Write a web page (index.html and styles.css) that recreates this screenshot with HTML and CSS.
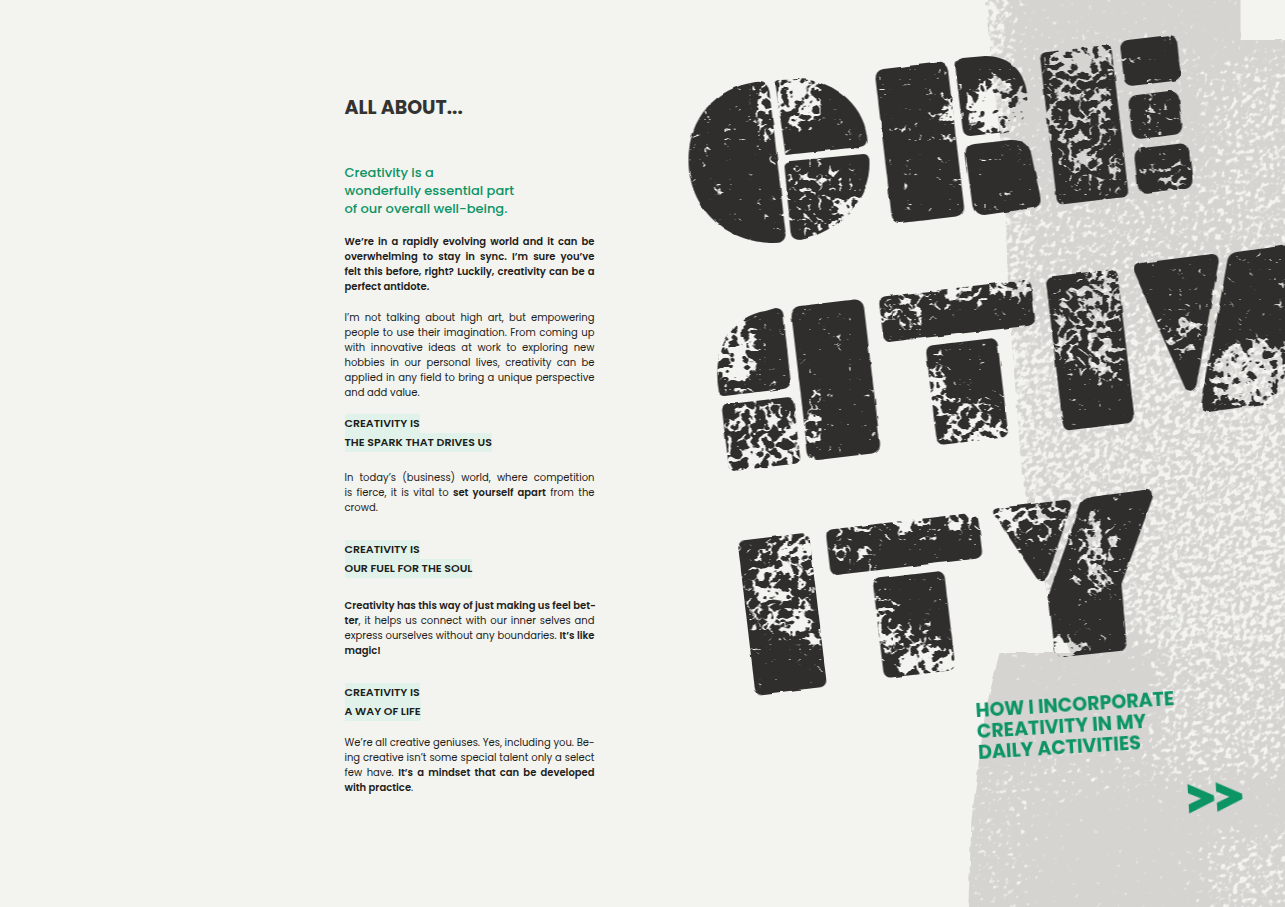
FILE: index.html
```html
<!DOCTYPE html>
<html lang="en">
<head>
<meta charset="utf-8">
<meta name="viewport" content="width=device-width, initial-scale=1">
<title>Creativity</title>
<link rel="stylesheet" href="styles.css">
</head>
<body>
<main class="spread">
  <article class="story">
    <h1 class="kicker">ALL ABOUT...</h1>
    <p class="lead">Creativity is a<br>wonderfully essential part<br>of our overall well-being.</p>
    <p class="copy strong">
      <span class="line">We’re in a rapidly evolving world and it can be</span>
      <span class="line">overwhelming to stay in sync. I’m sure you’ve</span>
      <span class="line">felt this before, right? Luckily, creativity can be a</span>
      <span class="line">perfect antidote.</span>
    </p>
    <p class="copy">
      <span class="line">I’m not talking about high art, but empowering</span>
      <span class="line">people to use their imagination. From coming up</span>
      <span class="line">with innovative ideas at work to exploring new</span>
      <span class="line">hobbies in our personal lives, creativity can be</span>
      <span class="line">applied in any field to bring a unique perspective</span>
      <span class="line">and add value.</span>
    </p>
    <h2 class="topic"><mark>CREATIVITY IS</mark><br><mark>THE SPARK THAT DRIVES US</mark></h2>
    <p class="copy">
      <span class="line">In today’s (business) world, where competition</span>
      <span class="line">is fierce, it is vital to <b>set yourself apart</b> from the</span>
      <span class="line">crowd.</span>
    </p>
    <h2 class="topic spaced airy"><mark>CREATIVITY IS</mark><br><mark>OUR FUEL FOR THE SOUL</mark></h2>
    <p class="copy">
      <span class="line"><b>Creativity has this way of just making us feel bet-</b></span>
      <span class="line"><b>ter</b>, it helps us connect with our inner selves and</span>
      <span class="line">express ourselves without any boundaries. <b>It’s like</b></span>
      <span class="line"><b>magic!</b></span>
    </p>
    <h2 class="topic spaced snug"><mark>CREATIVITY IS</mark><br><mark>A WAY OF LIFE</mark></h2>
    <p class="copy">
      <span class="line">We’re all creative geniuses. Yes, including you. Be-</span>
      <span class="line">ing creative isn’t some special talent only a select</span>
      <span class="line">few have. <b>It’s a mindset that can be developed</b></span>
      <span class="line"><b>with practice</b>.</span>
    </p>
  </article>

  <section class="poster">
    <svg class="art" viewBox="642.5 0 642.5 907" preserveAspectRatio="xMaxYMin slice" role="img" aria-label="Creativity">
      <defs>
        <filter id="flecks" filterUnits="userSpaceOnUse" x="640" y="0" width="660" height="907" color-interpolation-filters="sRGB">
          <feGaussianBlur in="SourceGraphic" stdDeviation="6" result="density"/>
          <feTurbulence type="fractalNoise" baseFrequency="0.09" numOctaves="2" seed="11"/>
          <feColorMatrix values="0 0 0 0 0  0 0 0 0 0  0 0 0 0 0  2 0 0 0 -0.5" result="patches"/>
          <feTurbulence type="turbulence" baseFrequency="0.1" numOctaves="2" seed="7"/>
          <feColorMatrix values="0 0 0 0 0  0 0 0 0 0  0 0 0 0 0  -1 0 0 0 1" result="veins"/>
          <feComposite in="veins" in2="patches" operator="arithmetic" k1="0" k2="0.75" k3="0.25" k4="0" result="mottle"/>
          <feComposite in="density" in2="mottle" operator="arithmetic" k1="0" k2="0.42" k3="1" k4="-0.99"/>
          <feComponentTransfer><feFuncA type="linear" slope="16"/></feComponentTransfer>
        </filter>
        <filter id="weave" filterUnits="userSpaceOnUse" x="500" y="-200" width="1260" height="1300" color-interpolation-filters="sRGB">
          <feGaussianBlur in="SourceGraphic" stdDeviation="16" result="density"/>
          <feTurbulence type="fractalNoise" baseFrequency="0.16 0.22" numOctaves="2" seed="21"/>
          <feColorMatrix values="0 0 0 0 0  0 0 0 0 0  0 0 0 0 0  1.6 0 0 0 -0.3" result="grain"/>
          <feComposite in="density" in2="grain" operator="arithmetic" k1="0" k2="0.62" k3="1" k4="-0.87"/>
          <feComponentTransfer><feFuncA type="linear" slope="4"/></feComponentTransfer>
        </filter>
        <filter id="rough" x="-5%" y="-5%" width="110%" height="110%" color-interpolation-filters="sRGB">
          <feTurbulence type="fractalNoise" baseFrequency="0.07" numOctaves="1" seed="3"/>
          <feDisplacementMap in="SourceGraphic" scale="3" xChannelSelector="R" yChannelSelector="G"/>
        </filter>
        <mask id="wash-wear" maskUnits="userSpaceOnUse" x="900" y="-20" width="420" height="960">
          <rect x="900" y="-20" width="420" height="960" fill="#fff"/>
          <g transform="rotate(-40 1130 450)">
            <g filter="url(#weave)">
              <g transform="rotate(40 1130 450)">
                <rect x="960" y="-60" width="50" height="250" opacity=".95"/>
                <rect x="990" y="190" width="310" height="160" opacity=".5"/>
                <rect x="980" y="340" width="320" height="300" opacity=".7"/>
                <rect x="980" y="160" width="46" height="480" opacity=".5"/>
                <rect x="1150" y="620" width="150" height="160" opacity=".62"/>
                <rect x="1200" y="60" width="100" height="130" opacity=".5"/>
                <rect x="1240" y="30" width="60" height="600" opacity=".2"/>
                <rect x="1030" y="20" width="170" height="170" opacity=".25"/>
                <rect x="970" y="760" width="60" height="150" opacity=".4"/>
                <rect x="1030" y="740" width="120" height="60" opacity=".3"/>
                <rect x="1200" y="830" width="100" height="90" opacity=".6"/>
              </g>
            </g>
          </g>
        </mask>
        <mask id="print-wear" maskUnits="userSpaceOnUse" x="640" y="0" width="660" height="907">
          <rect x="640" y="0" width="660" height="907" fill="#fff"/>
          <g filter="url(#flecks)" fill="#000">
            <rect x="640" y="0" width="660" height="907" opacity=".22"/>
            <ellipse cx="762" cy="110" rx="10" ry="40" opacity=".6"/>
            <ellipse cx="796" cy="102" rx="24" ry="26" opacity=".9"/>
            <ellipse cx="822" cy="200" rx="45" ry="36" opacity=".4"/>
            <ellipse cx="850" cy="215" rx="16" ry="22" opacity=".7"/>
            <ellipse cx="945" cy="118" rx="10" ry="18" opacity=".6"/>
            <ellipse cx="998" cy="108" rx="36" ry="28" opacity=".95"/>
            <ellipse cx="1082" cy="56" rx="38" ry="16" opacity="1"/>
            <ellipse cx="1078" cy="110" rx="34" ry="60" opacity=".55"/>
            <ellipse cx="1095" cy="172" rx="30" ry="24" opacity=".45"/>
            <ellipse cx="1150" cy="115" rx="20" ry="20" opacity=".4"/>
            <ellipse cx="1172" cy="178" rx="20" ry="18" opacity=".6"/>
            <ellipse cx="736" cy="350" rx="22" ry="40" opacity=".9"/>
            <ellipse cx="760" cy="440" rx="40" ry="40" opacity=".6"/>
            <ellipse cx="765" cy="460" rx="34" ry="14" opacity=".7"/>
            <ellipse cx="812" cy="425" rx="14" ry="32" opacity=".5"/>
            <ellipse cx="905" cy="310" rx="26" ry="26" opacity=".4"/>
            <ellipse cx="960" cy="292" rx="32" ry="10" opacity=".8"/>
            <ellipse cx="1015" cy="285" rx="20" ry="14" opacity=".9"/>
            <ellipse cx="934" cy="385" rx="10" ry="30" opacity=".8"/>
            <ellipse cx="965" cy="410" rx="34" ry="16" opacity=".5"/>
            <ellipse cx="980" cy="434" rx="34" ry="13" opacity="1"/>
            <ellipse cx="1105" cy="285" rx="20" ry="24" opacity=".7"/>
            <ellipse cx="1085" cy="325" rx="36" ry="48" opacity=".55"/>
            <ellipse cx="1110" cy="365" rx="20" ry="20" opacity=".6"/>
            <ellipse cx="1180" cy="330" rx="26" ry="18" opacity=".5"/>
            <ellipse cx="1252" cy="375" rx="42" ry="36" opacity=".95"/>
            <ellipse cx="795" cy="548" rx="20" ry="24" opacity=".7"/>
            <ellipse cx="778" cy="590" rx="36" ry="48" opacity=".55"/>
            <ellipse cx="804" cy="630" rx="20" ry="20" opacity=".6"/>
            <ellipse cx="853" cy="542" rx="26" ry="26" opacity=".4"/>
            <ellipse cx="908" cy="524" rx="32" ry="10" opacity=".8"/>
            <ellipse cx="964" cy="517" rx="20" ry="14" opacity=".9"/>
            <ellipse cx="881" cy="618" rx="10" ry="30" opacity=".8"/>
            <ellipse cx="912" cy="643" rx="34" ry="16" opacity=".5"/>
            <ellipse cx="928" cy="667" rx="34" ry="13" opacity="1"/>
            <ellipse cx="1010" cy="517" rx="20" ry="11" opacity=".9"/>
            <ellipse cx="1042" cy="520" rx="32" ry="22" opacity=".55"/>
            <ellipse cx="1096" cy="555" rx="22" ry="42" opacity=".65"/>
            <ellipse cx="1064" cy="648" rx="16" ry="13" opacity=".95"/>
          </g>
        </mask>
      </defs>

      <!-- brushed grey wash -->
      <g mask="url(#wash-wear)">
        <path class="wash" filter="url(#rough)" d="M982 -20H1240V40H1310V930H967L971 820L985 710L999 653H1070L1048 600L1022 480L1008 300L1004 180Z"/>
      </g>

      <!-- block-print lettering -->
      <g mask="url(#print-wear)">
        <g class="ink" filter="url(#rough)">
          <path d="M755 82Q767 80 769 92L785 232Q786 243 774 243C725 243 688 208 688 160C688 118 715 88 755 82Z"/>
          <path d="M775 84Q775 80 780 80L798 79C838 80 866 110 867 141Q867 146 860 147L785 155Z"/>
          <path d="M784 166Q784 162 790 161L863 154Q869 154 869 162C870 200 838 232 800 240Q791 240 790 232Z"/>
          <rect width="73" height="155" rx="9" transform="translate(874 70) rotate(-6.7)"/>
          <path d="M955 68Q954 60 962 58L985 56C1012 56 1026 75 1027 98C1027 118 1018 130 1005 132L970 136Q963 136 962 128Z"/>
          <path d="M965 154Q965 145 974 144L1010 140Q1027 139 1031 155L1040 198Q1041 206 1033 208L984 215Q974 215 972 206Z"/>
          <rect width="72" height="153" rx="6" transform="translate(1039 53) rotate(-6.7)"/>
          <rect width="57" height="46" rx="8" transform="translate(1119 41) rotate(-6.7)"/>
          <rect width="51" height="44" rx="9" transform="translate(1127 96) rotate(-6.7)"/>
          <rect width="55" height="46" rx="9" transform="translate(1133 149) rotate(-6.7)"/>

          <path d="M718 390C712 350 730 316 765 311L775 308Q782 308 783 315L790 380Q790 388 783 389L724 396Q718 396 718 390Z"/>
          <rect width="72" height="67" rx="6" transform="translate(721 405) rotate(-6.7)"/>
          <rect width="73" height="155" rx="9" transform="translate(790 307) rotate(-6.7)"/>
          <rect width="153" height="46" rx="7" transform="translate(878 297) rotate(-6.7)"/>
          <rect width="72" height="100" rx="7" transform="translate(925 346) rotate(-6.7)"/>
          <rect width="72" height="155" rx="7" transform="translate(1045 277) rotate(-6.7)"/>
          <path d="M1134 273Q1131 265 1140 263L1211 254Q1219 254 1218 263L1196 385Q1192 394 1185 389Z"/>
          <path d="M1227 260Q1229 253 1236 252L1310 242V320L1274 398Q1272 403 1264 404L1208 412Q1200 412 1201 403Z"/>

          <rect width="72" height="155" rx="7" transform="translate(737 541) rotate(-6.7)"/>
          <rect width="153" height="46" rx="7" transform="translate(825 530) rotate(-6.7)"/>
          <rect width="72" height="100" rx="7" transform="translate(872 579) rotate(-6.7)"/>
          <path d="M993 514Q991 509 998 508L1064 500Q1072 500 1070 508L1047 577Q1042 585 1036 578Z"/>
          <path d="M1080 504Q1082 499 1090 497L1144 490Q1154 489 1152 498L1121 584L1126 643Q1126 650 1119 651L1062 657Q1055 657 1054 649L1048 595Z"/>
        </g>
      </g>
    </svg>
    <div class="teaser">
      <h2 class="teaser-title">HOW I INCORPORATE<br>CREATIVITY IN MY<br>DAILY ACTIVITIES</h2>
      <a class="next" href="#next" aria-label="Next page">&gt;&gt;</a>
    </div>
  </section>
</main>
</body>
</html>
```
FILE: styles.css
```css
* {
  box-sizing: border-box;
}

body {
  margin: 0;
  background: #f3f3ef;
  color: #1d1d1b;
  font-family: Poppins, Inter, "Open Sans", sans-serif;
}

.spread {
  display: grid;
  grid-template-columns: 1fr 1fr;
  min-height: 100vh;
  overflow: hidden;
}

.story {
  justify-self: end;
  width: 250px;
  margin-right: 48px;
  padding: 96px 0 40px;
}

.kicker {
  margin: 0 0 44px;
  color: #333331;
  font-size: 19px;
  line-height: 24px;
  font-weight: 700;
}

.lead {
  margin: 0 0 16px;
  color: #0c9465;
  font-size: 13px;
  line-height: 18px;
  font-weight: 500;
}

.copy {
  margin: 0 0 14px;
  font-size: 10px;
  line-height: 15px;
}

.copy b,
.strong {
  font-weight: 600;
}

.strong {
  margin-bottom: 16px;
}

.line {
  display: block;
  text-align-last: justify;
  white-space: nowrap;
}

.line:last-child {
  text-align-last: left;
}

.topic {
  margin: 0 0 18px;
  font-size: 11px;
  line-height: 19px;
  font-weight: 600;
}

.topic mark {
  display: inline-block;
  background: #e0f2e9;
  color: inherit;
}

.spaced {
  margin-top: 25px;
}

.airy {
  margin-bottom: 20px;
}

.snug {
  margin-bottom: 14px;
}

.poster {
  position: relative;
}

.art {
  display: block;
  width: 100%;
  height: 100%;
}

.wash {
  fill: #d5d4d1;
}

.ink {
  fill: #2f2e2d;
}

.teaser {
  position: absolute;
  right: 44px;
  top: 692px;
  width: 262px;
  display: flex;
  flex-direction: column;
  transform: rotate(-3.5deg);
}

.teaser-title {
  margin: 0;
  color: #0c9465;
  font-size: 19px;
  line-height: 21px;
  font-weight: 700;
}

.next {
  align-self: flex-end;
  margin-top: 20px;
  color: #0c9465;
  font-family: "Open Sans", sans-serif;
  font-size: 48px;
  line-height: 56px;
  font-weight: 800;
  text-decoration: none;
  -webkit-text-stroke: 2px #0c9465;
}
```
